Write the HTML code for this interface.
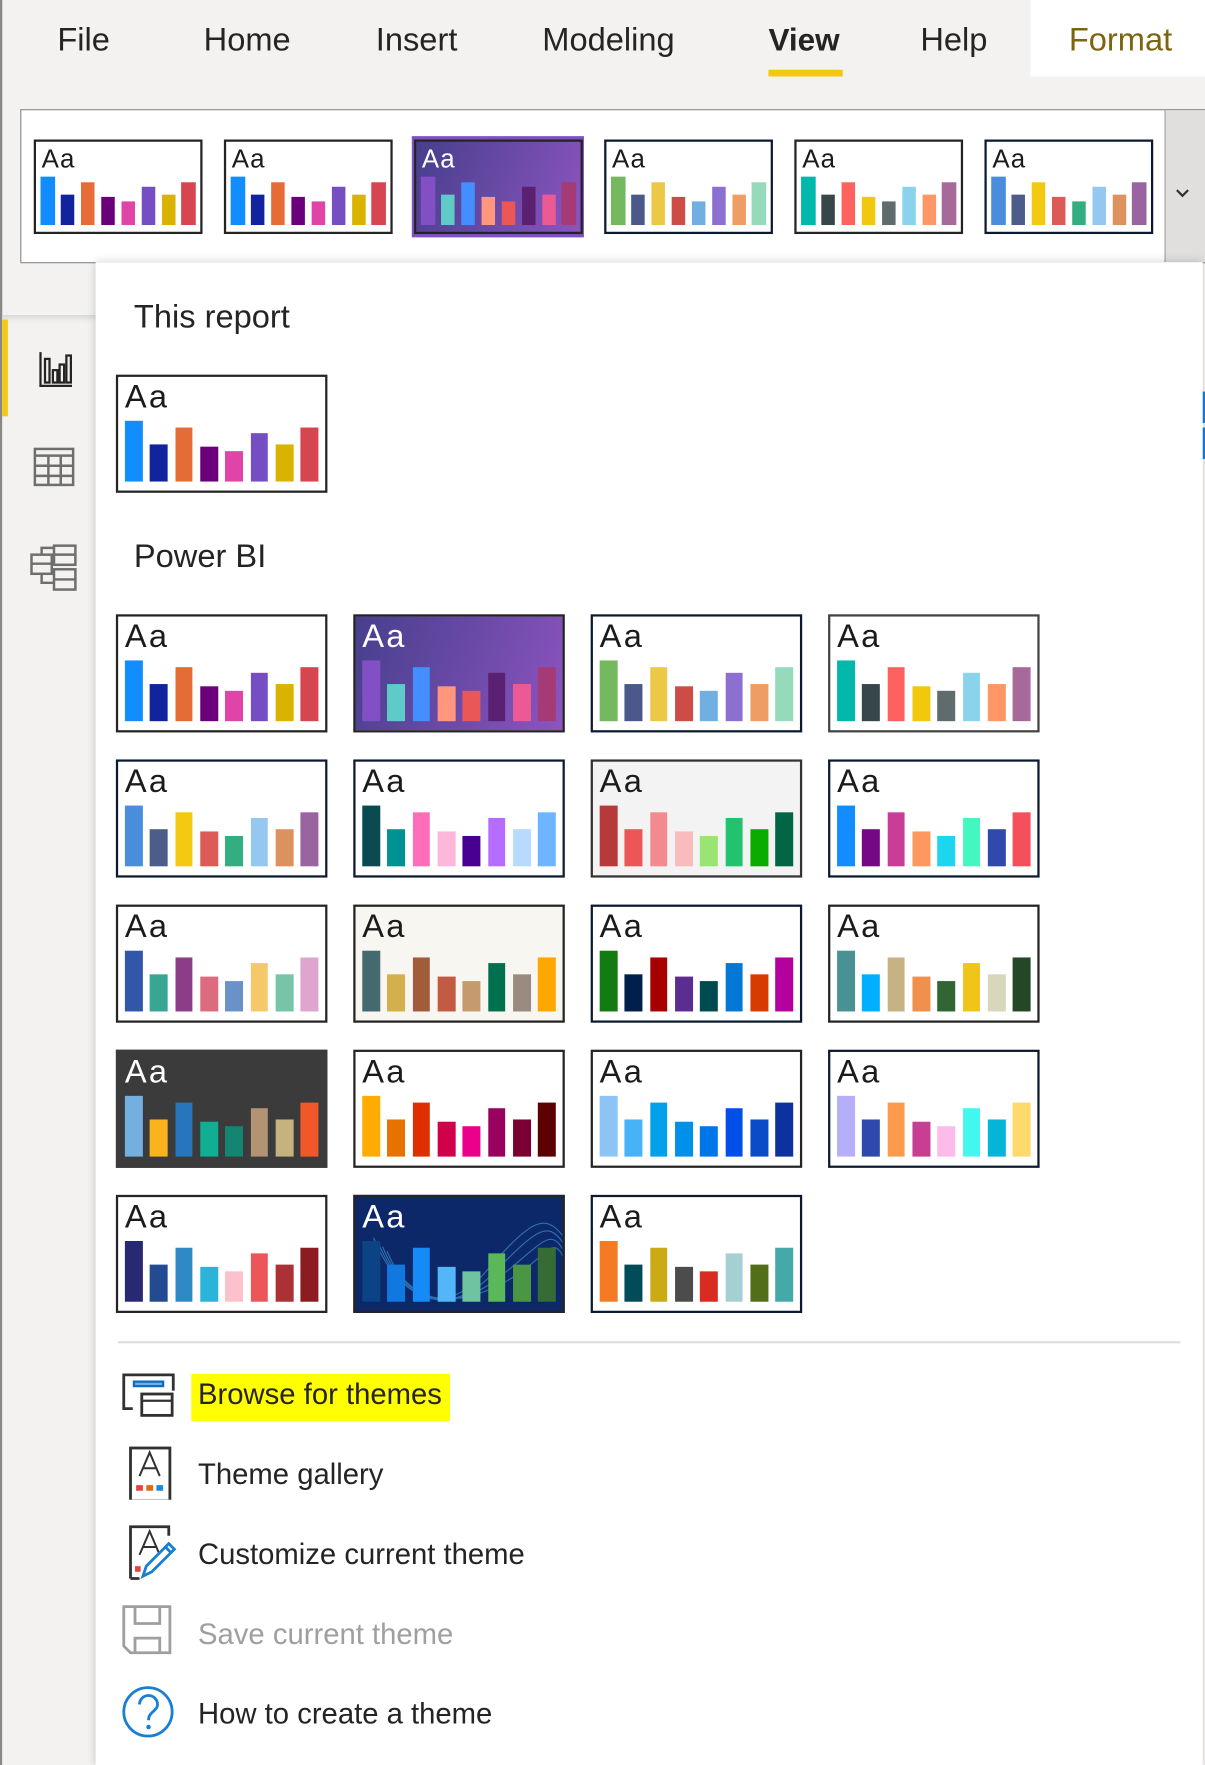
<!DOCTYPE html>
<html><head><meta charset="utf-8">
<style>
*{margin:0;padding:0;box-sizing:border-box}
html,body{width:1205px;height:1765px;overflow:hidden;background:#f3f2f1}
#w{position:absolute;left:0;top:0;width:1071px;height:1569px;transform:scale(1.1251);transform-origin:0 0;font-family:"Liberation Sans",sans-serif;color:#252423}
.a{position:absolute}
.tab{position:absolute;top:20px;font-size:29px;color:#252423}
.t{position:absolute;width:188px;height:105px;border:2px solid #252423;background:#fff}
.t span{position:absolute;left:6px;top:2px;font-size:29px;letter-spacing:2px;color:#1b1b1b}
.t .b{position:absolute;left:6px;width:172px;bottom:8px;height:54px;display:flex;justify-content:space-between;align-items:flex-end}
.t .b i{display:block;width:15.7px}
.s{width:150px;height:84px}
.s span{font-size:23px;left:5px;top:2px;letter-spacing:1px}
.s .b{left:4px;width:138px;bottom:6px;height:43px}
.s .b i{width:12.5px}
.b i:nth-child(1){height:100%}.b i:nth-child(2){height:62%}.b i:nth-child(3){height:88%}.b i:nth-child(4){height:58%}
.b i:nth-child(5){height:50%}.b i:nth-child(6){height:79%}.b i:nth-child(7){height:62%}.b i:nth-child(8){height:88%}
.w span{color:#fff}
.mi{position:absolute;left:176px;font-size:26px;color:#252423}
</style></head><body><div id="w">
<div class="a" style="left:0;top:0;width:2px;height:1569px;background:#8a8886"></div>
<div class="tab" style="left:51px">File</div>
<div class="tab" style="left:181px">Home</div>
<div class="tab" style="left:334px">Insert</div>
<div class="tab" style="left:482px">Modeling</div>
<div class="tab" style="left:683px;font-weight:bold;font-size:28px">View</div>
<div class="a" style="left:683px;top:62px;width:66px;height:6px;background:#f2c811"></div>
<div class="tab" style="left:818px">Help</div>
<div class="a" style="left:916px;top:0;width:155px;height:68px;background:#fff"></div>
<div class="tab" style="left:950px;color:#7d6510">Format</div>

<div class="a" style="left:18px;top:97px;width:1060px;height:137px;background:#fff;border:1px solid #8a8886"></div>
<div class="a" style="left:1035px;top:98px;width:36px;height:135px;background:#e1dfdd;border-left:1px solid #a19f9d"></div>
<svg class="a" style="left:1043px;top:166px" width="16" height="12"><path d="M3 3l5 5 5-5" stroke="#323130" stroke-width="2" fill="none"/></svg>

<div class="t s" style="left:30px;top:124px"><span>Aa</span><div class="b"><i style="background:#118dff"></i><i style="background:#12239e"></i><i style="background:#e66c37"></i><i style="background:#6b007b"></i><i style="background:#e044a7"></i><i style="background:#744ec2"></i><i style="background:#d9b300"></i><i style="background:#d64550"></i></div></div>
<div class="t s" style="left:199px;top:124px"><span>Aa</span><div class="b"><i style="background:#118dff"></i><i style="background:#12239e"></i><i style="background:#e66c37"></i><i style="background:#6b007b"></i><i style="background:#e044a7"></i><i style="background:#744ec2"></i><i style="background:#d9b300"></i><i style="background:#d64550"></i></div></div>
<div class="a" style="left:366px;top:121px;width:153px;height:90px;background:#7e50c0"></div>
<div class="t s w" style="left:368px;top:124px;background:linear-gradient(110deg,#463f8c,#8c54c0)"><span>Aa</span><div class="b"><i style="background:#8250c4"></i><i style="background:#5ecbc8"></i><i style="background:#438fff"></i><i style="background:#ff977e"></i><i style="background:#eb5757"></i><i style="background:#5b2071"></i><i style="background:#ec5a96"></i><i style="background:#a43b76"></i></div></div>
<div class="t s" style="left:537px;top:124px;border-color:#0c1a30"><span>Aa</span><div class="b"><i style="background:#74b95f"></i><i style="background:#4a588a"></i><i style="background:#ecc846"></i><i style="background:#cd4c46"></i><i style="background:#71afe2"></i><i style="background:#8d6fd1"></i><i style="background:#ee9e64"></i><i style="background:#95dabb"></i></div></div>
<div class="t s" style="left:706px;top:124px"><span>Aa</span><div class="b"><i style="background:#01b8aa"></i><i style="background:#374649"></i><i style="background:#fd625e"></i><i style="background:#f2c80f"></i><i style="background:#5f6b6d"></i><i style="background:#8ad4eb"></i><i style="background:#fe9666"></i><i style="background:#a66999"></i></div></div>
<div class="t s" style="left:875px;top:124px;border-color:#0c1a30"><span>Aa</span><div class="b"><i style="background:#4a8ddc"></i><i style="background:#4c5d8a"></i><i style="background:#f3c911"></i><i style="background:#dc5b57"></i><i style="background:#33ae81"></i><i style="background:#95c8f0"></i><i style="background:#dd915f"></i><i style="background:#9a64a0"></i></div></div>

<!-- sidebar -->
<div class="a" style="left:2px;top:280px;width:83px;height:1289px;background:#f3f2f1;box-shadow:inset 0 6px 6px -4px #d0d0d0"></div>
<div class="a" style="left:2px;top:284px;width:5px;height:86px;background:#f2c811"></div>
<svg class="a" style="left:30px;top:310px" width="36" height="36" fill="none" stroke="#252423" stroke-width="2"><path d="M6 3v30h28"/><rect x="10" y="9" width="4" height="21"/><rect x="17" y="19" width="4" height="11"/><rect x="23" y="14" width="4" height="16"/><rect x="29" y="6" width="4" height="24"/></svg>
<svg class="a" style="left:29px;top:397px" width="38" height="36" fill="none" stroke="#6e6e6e" stroke-width="2.2"><rect x="2" y="2" width="34" height="32"/><path d="M2 8h34M2 17h34M2 26h34M14 8v26M25 8v26"/></svg>
<svg class="a" style="left:26px;top:482px" width="44" height="46" fill="none" stroke="#6e6e6e" stroke-width="2.2"><rect x="2" y="11" width="18" height="17"/><path d="M2 19h18"/><rect x="22" y="3" width="19" height="17"/><path d="M22 11h19"/><rect x="22" y="24" width="19" height="18"/><path d="M22 33h19M11 11V5h11M11 28v8h11"/></svg>

<!-- panel -->
<div class="a" style="left:85px;top:233px;width:984px;height:1336px;background:#fff;box-shadow:0 0 8px rgba(0,0,0,.18)"></div>
<div class="a" style="left:1069px;top:348px;width:2px;height:28px;background:#0f78d4"></div>
<div class="a" style="left:1069px;top:380px;width:2px;height:28px;background:#0f78d4"></div>
<div class="a" style="left:119px;top:266px;font-size:29px">This report</div>
<div class="t" style="left:103px;top:333px"><span>Aa</span><div class="b"><i style="background:#118dff"></i><i style="background:#12239e"></i><i style="background:#e66c37"></i><i style="background:#6b007b"></i><i style="background:#e044a7"></i><i style="background:#744ec2"></i><i style="background:#d9b300"></i><i style="background:#d64550"></i></div></div>
<div class="a" style="left:119px;top:479px;font-size:29px">Power BI</div>

<div class="t" style="left:103px;top:546px"><span>Aa</span><div class="b"><i style="background:#118dff"></i><i style="background:#12239e"></i><i style="background:#e66c37"></i><i style="background:#6b007b"></i><i style="background:#e044a7"></i><i style="background:#744ec2"></i><i style="background:#d9b300"></i><i style="background:#d64550"></i></div></div>
<div class="t w" style="left:314px;top:546px;background:linear-gradient(110deg,#463f8c,#8c54c0)"><span>Aa</span><div class="b"><i style="background:#8250c4"></i><i style="background:#5ecbc8"></i><i style="background:#438fff"></i><i style="background:#ff977e"></i><i style="background:#eb5757"></i><i style="background:#5b2071"></i><i style="background:#ec5a96"></i><i style="background:#a43b76"></i></div></div>
<div class="t" style="left:525px;top:546px;border-color:#0c1a30"><span>Aa</span><div class="b"><i style="background:#74b95f"></i><i style="background:#4a588a"></i><i style="background:#ecc846"></i><i style="background:#cd4c46"></i><i style="background:#71afe2"></i><i style="background:#8d6fd1"></i><i style="background:#ee9e64"></i><i style="background:#95dabb"></i></div></div>
<div class="t" style="left:736px;top:546px;border-color:#444"><span>Aa</span><div class="b"><i style="background:#01b8aa"></i><i style="background:#374649"></i><i style="background:#fd625e"></i><i style="background:#f2c80f"></i><i style="background:#5f6b6d"></i><i style="background:#8ad4eb"></i><i style="background:#fe9666"></i><i style="background:#a66999"></i></div></div>

<div class="t" style="left:103px;top:675px;border-color:#0c1a30"><span>Aa</span><div class="b"><i style="background:#4a8ddc"></i><i style="background:#4c5d8a"></i><i style="background:#f3c911"></i><i style="background:#dc5b57"></i><i style="background:#33ae81"></i><i style="background:#95c8f0"></i><i style="background:#dd915f"></i><i style="background:#9a64a0"></i></div></div>
<div class="t" style="left:314px;top:675px;border-color:#0c1a30"><span>Aa</span><div class="b"><i style="background:#0a4a51"></i><i style="background:#009292"></i><i style="background:#ff6db6"></i><i style="background:#ffb6db"></i><i style="background:#490092"></i><i style="background:#b66dff"></i><i style="background:#b6dbff"></i><i style="background:#6db6ff"></i></div></div>
<div class="t" style="left:525px;top:675px;background:#f3f3f3;border-color:#333"><span>Aa</span><div class="b"><i style="background:#b73a3a"></i><i style="background:#ec5656"></i><i style="background:#f28a90"></i><i style="background:#f8bcbd"></i><i style="background:#99e472"></i><i style="background:#23c26f"></i><i style="background:#0aac00"></i><i style="background:#026645"></i></div></div>
<div class="t" style="left:736px;top:675px;border-color:#0c1a30"><span>Aa</span><div class="b"><i style="background:#118dff"></i><i style="background:#750985"></i><i style="background:#c83d95"></i><i style="background:#ff985e"></i><i style="background:#1dd5ee"></i><i style="background:#42f7c0"></i><i style="background:#3049ad"></i><i style="background:#f64f5c"></i></div></div>

<div class="t" style="left:103px;top:804px"><span>Aa</span><div class="b"><i style="background:#3257a8"></i><i style="background:#37a794"></i><i style="background:#8b3d88"></i><i style="background:#dd6b7f"></i><i style="background:#6b91c9"></i><i style="background:#f5c869"></i><i style="background:#77c4a8"></i><i style="background:#dea6cf"></i></div></div>
<div class="t" style="left:314px;top:804px;background:#f7f6f1"><span>Aa</span><div class="b"><i style="background:#44696f"></i><i style="background:#d4b04c"></i><i style="background:#a15c39"></i><i style="background:#c25b42"></i><i style="background:#c59b6e"></i><i style="background:#00704f"></i><i style="background:#998b80"></i><i style="background:#ffa600"></i></div></div>
<div class="t" style="left:525px;top:804px;border-color:#0c1a30"><span>Aa</span><div class="b"><i style="background:#127c12"></i><i style="background:#001f4d"></i><i style="background:#a70000"></i><i style="background:#5c2d91"></i><i style="background:#004b50"></i><i style="background:#0078d4"></i><i style="background:#d83b01"></i><i style="background:#b4009e"></i></div></div>
<div class="t" style="left:736px;top:804px"><span>Aa</span><div class="b"><i style="background:#4a9194"></i><i style="background:#00b0ff"></i><i style="background:#c5b383"></i><i style="background:#ef904c"></i><i style="background:#2f6633"></i><i style="background:#f0c419"></i><i style="background:#d8d7bc"></i><i style="background:#244826"></i></div></div>

<div class="t w" style="left:103px;top:933px;background:#3b3b3b;border-color:#3b3b3b"><span>Aa</span><div class="b"><i style="background:#73b0e0"></i><i style="background:#fab31d"></i><i style="background:#2675bd"></i><i style="background:#10ae93"></i><i style="background:#138570"></i><i style="background:#b29475"></i><i style="background:#c6b27f"></i><i style="background:#f2572a"></i></div></div>
<div class="t" style="left:314px;top:933px"><span>Aa</span><div class="b"><i style="background:#ffab00"></i><i style="background:#e67200"></i><i style="background:#de2f00"></i><i style="background:#d1004a"></i><i style="background:#ea008d"></i><i style="background:#9a0060"></i><i style="background:#7a0033"></i><i style="background:#5c0000"></i></div></div>
<div class="t" style="left:525px;top:933px"><span>Aa</span><div class="b"><i style="background:#8cc5f5"></i><i style="background:#47b2f5"></i><i style="background:#00a0ea"></i><i style="background:#0090ea"></i><i style="background:#0076e8"></i><i style="background:#0050e8"></i><i style="background:#0b4ac8"></i><i style="background:#0c32a0"></i></div></div>
<div class="t" style="left:736px;top:933px;border-color:#0c1a30"><span>Aa</span><div class="b"><i style="background:#b7aefa"></i><i style="background:#2f48ac"></i><i style="background:#fd9a4c"></i><i style="background:#c73f93"></i><i style="background:#fdbbea"></i><i style="background:#41f7f0"></i><i style="background:#03b6d8"></i><i style="background:#fed96c"></i></div></div>

<div class="t" style="left:103px;top:1062px"><span>Aa</span><div class="b"><i style="background:#272a73"></i><i style="background:#234b92"></i><i style="background:#2f89c5"></i><i style="background:#2ab4d9"></i><i style="background:#fdc1cc"></i><i style="background:#ec5659"></i><i style="background:#ab3135"></i><i style="background:#8b1d21"></i></div></div>
<div class="t w" style="left:314px;top:1062px;background:#0d2868;overflow:hidden"><svg class="a" style="left:0;top:0" width="184" height="101" fill="none" stroke="#3a8fd0" stroke-width="1" opacity=".7"><path d="M20 40C40 90 80 110 120 70S170 20 184 40"/><path d="M24 44C44 94 84 104 124 74S172 26 184 46"/><path d="M28 48C48 98 88 98 128 78S174 32 184 52"/><path d="M16 36C36 86 76 112 116 66S168 14 184 34"/></svg><span>Aa</span><div class="b"><i style="background:#0b4384"></i><i style="background:#1078de"></i><i style="background:#148bf5"></i><i style="background:#55b5f9"></i><i style="background:#6fc39e"></i><i style="background:#5bb858"></i><i style="background:#4a9645"></i><i style="background:#356c36"></i></div></div>
<div class="t" style="left:525px;top:1062px;border-color:#0c1a30"><span>Aa</span><div class="b"><i style="background:#f47a24"></i><i style="background:#004d59"></i><i style="background:#caaa15"></i><i style="background:#4c4c4c"></i><i style="background:#d82c20"></i><i style="background:#a5d0d3"></i><i style="background:#526e18"></i><i style="background:#45a9a9"></i></div></div>

<div class="a" style="left:105px;top:1192px;width:944px;height:2px;background:#e1dfdd"></div>

<div class="a" style="left:170px;top:1221px;width:230px;height:42px;background:#ffff00"></div>
<svg class="a" style="left:108px;top:1220px" width="48" height="42" fill="none"><path d="M10 32H2V2h44v14" stroke="#323130" stroke-width="2.5"/><rect x="10" y="7" width="28" height="6" fill="#0f6cbd"/><rect x="12" y="9" width="24" height="2" fill="#6fb0e8"/><rect x="18" y="19" width="27" height="19" fill="#fff" stroke="#323130" stroke-width="2.5"/><path d="M18 25h27" stroke="#323130" stroke-width="2"/></svg>
<div class="mi" style="top:1224px">Browse for themes</div>

<svg class="a" style="left:113px;top:1285px" width="40" height="48" fill="none"><rect x="3" y="2" width="35" height="47" stroke="#323130" stroke-width="2.5"/><path d="M11 27L20 6l9 21M14 20h12" stroke="#323130" stroke-width="1.8"/><rect x="8" y="35" width="6" height="5" fill="#e8413a"/><rect x="17" y="35" width="6" height="5" fill="#e16a10"/><rect x="26" y="35" width="6" height="5" fill="#1a8ad4"/></svg>
<div class="mi" style="top:1295px">Theme gallery</div>

<svg class="a" style="left:113px;top:1355px" width="46" height="50" fill="none"><path d="M3 48V2h34v8M3 48h8" stroke="#323130" stroke-width="2.5"/><path d="M11 27L20 6l9 21M14 20h12" stroke="#323130" stroke-width="1.8"/><rect x="7" y="37" width="5" height="5" fill="#e8413a"/><path d="M14 46l3-9 20-20 5 5-20 20z" stroke="#1a7fd4" stroke-width="2.5" fill="#fff"/><path d="M34 20l5 5" stroke="#1a7fd4" stroke-width="2.5"/></svg>
<div class="mi" style="top:1366px">Customize current theme</div>

<svg class="a" style="left:108px;top:1426px" width="46" height="46" fill="none" stroke="#a19f9d" stroke-width="2.5"><path d="M2 2h41v41H8l-6-6z"/><path d="M12 2v15h22V2M12 43V30h22v13"/></svg>
<div class="mi" style="top:1437px;color:#a19f9d">Save current theme</div>

<svg class="a" style="left:108px;top:1498px" width="48" height="48" fill="none"><circle cx="23.5" cy="23.5" r="21.5" stroke="#1a7fd4" stroke-width="2.5"/><path d="M16 17c0-5 4-8 8-8s8 3 8 8c0 6-8 6-8 14" stroke="#1a7fd4" stroke-width="2.5"/><circle cx="24" cy="37" r="2" fill="#1a7fd4"/></svg>
<div class="mi" style="top:1508px">How to create a theme</div>
</div></body></html>
